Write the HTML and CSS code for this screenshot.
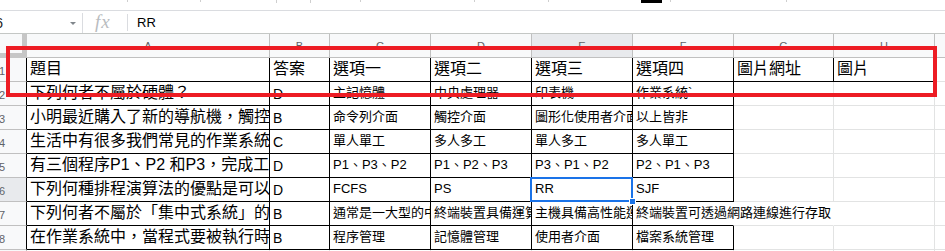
FILE: index.html
```html
<!DOCTYPE html>
<html lang="zh-Hant">
<head>
    <meta charset="UTF-8">
    <meta name="viewport" content="width=device-width, initial-scale=1.0">
    <link rel="stylesheet" href="styles.css">
    <title>題庫</title>
</head>
<body>
    <div class="sheet">
        <!-- bottom edge of the toolbar, mostly cut off -->
        <svg class="top-strip" width="945" height="10" viewBox="0 0 945 10">
            <g stroke="#cfcfcf" stroke-width="1">
                <line x1="127.5" y1="0" x2="127.5" y2="2"/>
                <line x1="200.5" y1="0" x2="200.5" y2="2"/>
                <line x1="276.5" y1="0" x2="276.5" y2="3"/>
                <line x1="310.5" y1="0" x2="310.5" y2="3"/>
                <line x1="360.5" y1="0" x2="360.5" y2="2"/>
                <line x1="474.5" y1="0" x2="474.5" y2="2"/>
                <line x1="548.5" y1="0" x2="548.5" y2="2"/>
                <line x1="670.5" y1="0" x2="670.5" y2="2"/>
                <line x1="786.5" y1="0" x2="786.5" y2="2"/>
            </g>
            <rect x="641" y="0" width="21" height="3" fill="#000"/>
        </svg>

        <div class="formula-bar">
            <div class="name-box">
                <span class="cell-ref">E6</span>
                <span class="caret"></span>
            </div>
            <div class="fx">fx</div>
            <div class="formula-value">RR</div>
        </div>

        <div class="grid">
            <!-- column headers -->
            <div class="corner"></div>
            <div class="ch">A</div>
            <div class="ch">B</div>
            <div class="ch">C</div>
            <div class="ch">D</div>
            <div class="ch active">E</div>
            <div class="ch">F</div>
            <div class="ch">G</div>
            <div class="ch">H</div>
            <div class="ch"></div>

            <!-- row 1 -->
            <div class="rh edge">1</div>
            <div class="cell k big">題目</div>
            <div class="cell k big">答案</div>
            <div class="cell k big">選項一</div>
            <div class="cell k big">選項二</div>
            <div class="cell k big">選項三</div>
            <div class="cell k big">選項四</div>
            <div class="cell k big">圖片網址</div>
            <div class="cell kb big">圖片</div>
            <div class="cell"></div>

            <!-- row 2 -->
            <div class="rh edge">2</div>
            <div class="cell k big">下列何者不屬於硬體？</div>
            <div class="cell k ans">D</div>
            <div class="cell k">主記憶體</div>
            <div class="cell k">中央處理器</div>
            <div class="cell k">印表機</div>
            <div class="cell k">作業系統`</div>
            <div class="cell"></div>
            <div class="cell"></div>
            <div class="cell"></div>

            <!-- row 3 -->
            <div class="rh edge">3</div>
            <div class="cell k big">小明最近購入了新的導航機，觸控</div>
            <div class="cell k ans">B</div>
            <div class="cell k">命令列介面</div>
            <div class="cell k">觸控介面</div>
            <div class="cell k">圖形化使用者介面</div>
            <div class="cell k">以上皆非</div>
            <div class="cell"></div>
            <div class="cell"></div>
            <div class="cell"></div>

            <!-- row 4 -->
            <div class="rh edge">4</div>
            <div class="cell k big">生活中有很多我們常見的作業系統</div>
            <div class="cell k ans">C</div>
            <div class="cell k">單人單工</div>
            <div class="cell k">多人多工</div>
            <div class="cell k">單人多工</div>
            <div class="cell k">多人單工</div>
            <div class="cell"></div>
            <div class="cell"></div>
            <div class="cell"></div>

            <!-- row 5 -->
            <div class="rh edge">5</div>
            <div class="cell k big">有三個程序P1、P2 和P3，完成工</div>
            <div class="cell k ans">D</div>
            <div class="cell k">P1、P3、P2</div>
            <div class="cell k">P1、P2、P3</div>
            <div class="cell k">P3、P1、P2</div>
            <div class="cell k">P2、P1、P3</div>
            <div class="cell"></div>
            <div class="cell"></div>
            <div class="cell"></div>

            <!-- row 6 -->
            <div class="rh edge active">6</div>
            <div class="cell k big">下列何種排程演算法的優點是可以</div>
            <div class="cell k ans">D</div>
            <div class="cell k">FCFS</div>
            <div class="cell k">PS</div>
            <div class="cell k selected">RR</div>
            <div class="cell k">SJF</div>
            <div class="cell"></div>
            <div class="cell"></div>
            <div class="cell"></div>

            <!-- row 7 -->
            <div class="rh edge">7</div>
            <div class="cell k big">下列何者不屬於「集中式系統」的</div>
            <div class="cell k ans">B</div>
            <div class="cell k">通常是一大型的中央</div>
            <div class="cell k">終端裝置具備運算能力</div>
            <div class="cell k">主機具備高性能運算</div>
            <div class="cell k spill">終端裝置可透過網路連線進行存取</div>
            <div class="cell no-right"></div>
            <div class="cell"></div>
            <div class="cell"></div>

            <!-- row 8 -->
            <div class="rh edge">8</div>
            <div class="cell k big">在作業系統中，當程式要被執行時</div>
            <div class="cell k ans">B</div>
            <div class="cell k">程序管理</div>
            <div class="cell k">記憶體管理</div>
            <div class="cell k">使用者介面</div>
            <div class="cell k">檔案系統管理</div>
            <div class="cell"></div>
            <div class="cell"></div>
            <div class="cell"></div>

            <!-- row 9, only its top line shows -->
            <div class="rh">9</div>
            <div class="cell"></div>
            <div class="cell"></div>
            <div class="cell"></div>
            <div class="cell"></div>
            <div class="cell"></div>
            <div class="cell"></div>
            <div class="cell"></div>
            <div class="cell"></div>
            <div class="cell"></div>
        </div>

        <!-- red marker drawn over the header row -->
        <div class="mark-box"></div>
    </div>
</body>
</html>
```

FILE: styles.css
```css
body {
    margin: 0;
    background: #fff;
    font-family: "Liberation Sans", "Noto Sans CJK TC", sans-serif;
}

.sheet {
    position: relative;
    width: 945px;
    height: 251px;
    overflow: hidden;
}

.top-strip {
    display: block;
    border-bottom: 1px solid #dadce0;
}

/* formula bar */
.formula-bar {
    display: flex;
    height: 22px;
    border-bottom: 1px solid #c4c7c5;
}

.name-box {
    display: flex;
    align-items: center;
    width: 83px;
    box-sizing: border-box;
    margin-top: 2px;
    border-right: 1px solid #dadce0;
}

.cell-ref {
    margin-left: -14px;
    font-size: 14px;
    color: #202124;
}

.caret {
    margin-left: auto;
    margin-right: 6px;
    margin-top: 1px;
    border-left: 3px solid transparent;
    border-right: 3px solid transparent;
    border-top: 3px solid #80868b;
}

.fx {
    width: 45px;
    box-sizing: border-box;
    margin: 3px 0 2px;
    padding-left: 12px;
    border-right: 1px solid #dadce0;
    font-family: "Liberation Serif", serif;
    font-style: italic;
    font-size: 19px;
    line-height: 15px;
    letter-spacing: 1px;
    color: #b9bcc0;
}

.formula-value {
    display: flex;
    align-items: center;
    padding-left: 9px;
    font-size: 13px;
    color: #000;
}

/* grid */
.grid {
    display: grid;
    grid-template-columns: 27px 243px 60px 101px 101px 101px 101px 100px 101px 11px;
    grid-auto-rows: 24px;
}

.grid > div {
    box-sizing: border-box;
}

.corner {
    background: #f8f9fa;
    border-right: 5px solid #c6c6c6;
    border-bottom: 5px solid #c6c6c6;
}

.ch {
    display: flex;
    align-items: center;
    justify-content: center;
    background: #f8f9fa;
    border-right: 1px solid #c0c0c0;
    border-bottom: 1px solid #c0c0c0;
    font-size: 11px;
    color: #5f6368;
}

.rh {
    display: flex;
    align-items: center;
    padding-top: 2px;
    text-indent: -1px;
    background: #f8f9fa;
    border-right: 1px solid #c0c0c0;
    border-bottom: 1px solid #c0c0c0;
    font-size: 11px;
    color: #5f6368;
}

.rh.edge {
    border-right-color: #000;
}

.ch.active,
.rh.active {
    background: #e8eaed;
}

.cell {
    display: flex;
    align-items: flex-end;
    padding: 0 3px 4px;
    overflow: hidden;
    white-space: nowrap;
    border-right: 1px solid #e2e3e3;
    border-bottom: 1px solid #e2e3e3;
    font-size: 13px;
    line-height: 1.25;
    color: #000;
}

.cell.k {
    border-color: #000;
}

.cell.kb {
    border-bottom-color: #000;
}

.cell.big {
    font-size: 16px;
    padding-bottom: 2px;
}

.cell.ans {
    font-size: 14px;
    padding-bottom: 2px;
}

/* text running on into the empty cells to the right */
.cell.spill {
    position: relative;
    z-index: 1;
    overflow: visible;
    border-right-color: transparent;
}

.cell.no-right {
    border-right-color: transparent;
}

/* active cell */
.cell.selected {
    position: relative;
    z-index: 2;
    overflow: visible;
}

.cell.selected::after {
    content: "";
    position: absolute;
    top: -1px;
    left: -2px;
    right: -1px;
    bottom: -1px;
    border: 2px solid #1a73e8;
}

.cell.selected::before {
    content: "";
    position: absolute;
    right: -4px;
    bottom: -4px;
    width: 5px;
    height: 5px;
    background: #1a73e8;
    border: 1px solid #fff;
    z-index: 1;
}

.mark-box {
    position: absolute;
    top: 46px;
    left: 6px;
    width: 931px;
    height: 51px;
    box-sizing: border-box;
    border: 4px solid #ed1c24;
}
```
